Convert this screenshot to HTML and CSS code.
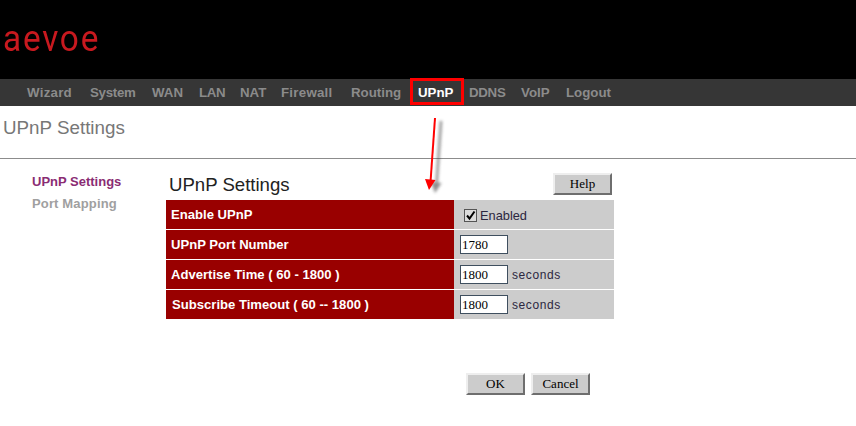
FILE: index.html
```html
<!DOCTYPE html>
<html lang="en">
<head>
<meta charset="utf-8">
<title>UPnP Settings</title>
<link rel="stylesheet" href="styles.css">
</head>
<body>
<header class="masthead"><span class="logo">aevoe</span></header>
<nav class="nav">
  <a class="nav-item nav-loose">Wizard</a>
  <a class="nav-item nav-tight">System</a>
  <a class="nav-item">WAN</a>
  <a class="nav-item nav-tight">LAN</a>
  <a class="nav-item">NAT</a>
  <a class="nav-item nav-loose">Firewall</a>
  <a class="nav-item">Routing</a>
  <a class="nav-item nav-active">UPnP</a>
  <a class="nav-item nav-tight">DDNS</a>
  <a class="nav-item">VoIP</a>
  <a class="nav-item">Logout</a>
</nav>
<h1 class="page-title">UPnP Settings</h1>
<main class="main">
  <aside class="side">
    <a class="side-link side-current">UPnP Settings</a>
    <a class="side-link">Port Mapping</a>
  </aside>
  <section class="panel">
    <div class="panel-head">
      <h2 class="panel-title">UPnP Settings</h2>
      <button class="btn" type="button">Help</button>
    </div>
    <table class="form">
      <tr><th>Enable UPnP</th><td><label class="check"><span class="box"><svg viewBox="0 0 13 13" width="13" height="13"><path d="M3 6.500 L5.500 9.500 L10.500 2.500" fill="none" stroke="#000" stroke-width="2"/></svg></span>Enabled</label></td></tr>
      <tr><th>UPnP Port Number</th><td><input class="field" value="1780"></td></tr>
      <tr><th>Advertise Time ( 60 - 1800 )</th><td><input class="field" value="1800"><span class="unit">seconds</span></td></tr>
      <tr><th class="shift">Subscribe Timeout ( 60 -- 1800 )</th><td><input class="field" value="1800"><span class="unit">seconds</span></td></tr>
    </table>
    <div class="actions">
      <button class="btn" type="button">OK</button>
      <button class="btn" type="button">Cancel</button>
    </div>
  </section>
</main>
<div class="note-box"></div>
<svg class="note-arrow" width="40" height="90" viewBox="0 0 40 90">
  <defs><filter id="blur" x="-100%" y="-20%" width="300%" height="140%"><feGaussianBlur stdDeviation="1.500"/></filter></defs>
  <g filter="url(#blur)" opacity=".6" transform="translate(6 3)">
    <path d="M15 2 L10.500 66" stroke="#444" stroke-width="2.500" fill="none"/>
    <path d="M5 63 L15.500 64 L9 74 Z" fill="#444"/>
  </g>
  <path d="M15 2 L10.500 66" stroke="#f00" stroke-width="2" fill="none"/>
  <path d="M5 63 L15.500 64 L9 74 Z" fill="#f00"/>
</svg>
</body>
</html>
```

FILE: styles.css
```css
* { box-sizing: border-box; }
html, body { margin: 0; padding: 0; background: #fff; }
body { position: relative; height: 426px; overflow: hidden; font-family: "Liberation Sans", Arial, sans-serif; }

.masthead { height: 79px; background: #000; padding: 17px 0 0 3px; }
.logo { display: block; width: 130px; color: #c8191f; font-family: Roboto, sans-serif; font-size: 37px; font-weight: 400; letter-spacing: 2px; line-height: 44px; transform: scaleX(.9); transform-origin: left center; }

.nav { display: grid; grid-template-columns: 63px 62px 47px 41px 41px 70px 67px 51px 52px 45px auto; align-items: center; height: 27px; padding: 0 0 1px 27px; background: #363636; }
.nav-item { color: #8b8b8b; font-size: 13.300px; font-weight: 700; white-space: nowrap; }
.nav-loose { letter-spacing: .25px; }
.nav-tight { letter-spacing: -.3px; }
.nav-active { color: #fff; }

.page-title { margin: 0; height: 53px; padding: 11px 0 0 3px; border-bottom: 1px solid #8c8c8c; color: #777; font-size: 18.800px; font-weight: 400; line-height: 21px; }

.main { display: flex; }
.side { width: 166px; padding: 14px 0 0 32px; display: flex; flex-direction: column; gap: 4px; }
.side-link { color: #a0a0a0; font-size: 13px; font-weight: 700; line-height: 18px; white-space: nowrap; letter-spacing: .15px; }
.side-current { color: #8a2c73; letter-spacing: 0; }

.panel { width: 448px; }
.panel-head { display: flex; justify-content: space-between; align-items: flex-start; height: 41px; padding: 14px 2px 0 3px; }
.panel-title { margin: 0; padding-top: 1px; color: #222; font-size: 18.600px; font-weight: 400; line-height: 21px; }

.btn { width: 59px; height: 22px; padding: 0 0 2px; background: #ccc; border: 2px solid; border-color: #eee #6e6e6e #6e6e6e #eee; color: #000; font-family: "Liberation Serif", serif; font-size: 13px; line-height: 15px; }

.form { width: 448px; border-collapse: separate; border-spacing: 0; }
.form th, .form td { height: 30px; padding: 0; border-bottom: 1px solid #fff; }
.form tr:last-child th, .form tr:last-child td { height: 29px; border-bottom: 0; }
.form th { width: 288px; padding-left: 5px; background: #990000; color: #fff; font-size: 13.100px; font-weight: 700; text-align: left; }
.form th.shift { padding-left: 6px; }
.form td { padding-left: 6px; background: #ccc; color: #2b2740; font-size: 12px; }

.check { display: flex; align-items: center; padding: 2px 0 0 4px; font-size: 12.800px; }
.box { width: 13px; height: 13px; margin-right: 3px; background: #dcdcdc; border: 1px solid #555; display: block; line-height: 0; }
.box svg { display: block; margin: -1px; }

.field { width: 48px; height: 19px; padding: 0 0 0 1px; border: 1px solid #3f4f5f; background: #fff; color: #000; font-family: "Liberation Serif", serif; font-size: 13px; vertical-align: middle; }
.unit { margin-left: 4px; font-size: 12px; letter-spacing: .6px; vertical-align: middle; }

.actions { display: flex; justify-content: flex-end; gap: 6px; padding: 54px 24px 0 0; }

.note-box { position: absolute; left: 410px; top: 78px; width: 54px; height: 27px; border: 3px solid #f00; }
.note-arrow { position: absolute; left: 420px; top: 116px; pointer-events: none; }
```
